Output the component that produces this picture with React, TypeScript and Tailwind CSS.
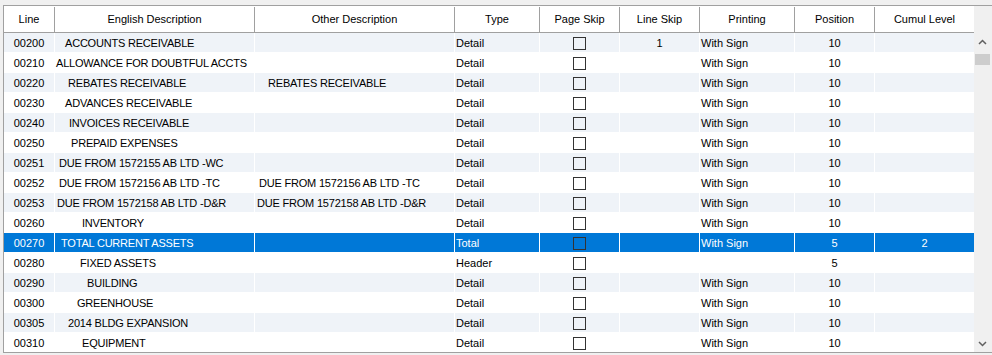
type Row = {
  line: string;
  desc: string;
  descPad: number;
  other?: string;
  otherPad?: number;
  type: string;
  lineSkip?: string;
  printing?: string;
  position: string;
  cumul?: string;
  selected?: boolean;
};

const rows: Row[] = [
  { line: "00200", desc: "ACCOUNTS RECEIVABLE", descPad: 10, type: "Detail", lineSkip: "1", printing: "With Sign", position: "10" },
  { line: "00210", desc: "ALLOWANCE FOR DOUBTFUL ACCTS", descPad: 1, type: "Detail", printing: "With Sign", position: "10" },
  { line: "00220", desc: "REBATES RECEIVABLE", descPad: 13, other: "REBATES RECEIVABLE", otherPad: 13, type: "Detail", printing: "With Sign", position: "10" },
  { line: "00230", desc: "ADVANCES RECEIVABLE", descPad: 10, type: "Detail", printing: "With Sign", position: "10" },
  { line: "00240", desc: "INVOICES RECEIVABLE", descPad: 14, type: "Detail", printing: "With Sign", position: "10" },
  { line: "00250", desc: "PREPAID EXPENSES", descPad: 16, type: "Detail", printing: "With Sign", position: "10" },
  { line: "00251", desc: "DUE FROM 1572155 AB LTD -WC", descPad: 4, type: "Detail", printing: "With Sign", position: "10" },
  { line: "00252", desc: "DUE FROM 1572156 AB LTD -TC", descPad: 4, other: "DUE FROM 1572156 AB LTD -TC", otherPad: 4, type: "Detail", printing: "With Sign", position: "10" },
  { line: "00253", desc: "DUE FROM 1572158 AB LTD -D&R", descPad: 2, other: "DUE FROM 1572158 AB LTD -D&R", otherPad: 2, type: "Detail", printing: "With Sign", position: "10" },
  { line: "00260", desc: "INVENTORY", descPad: 27, type: "Detail", printing: "With Sign", position: "10" },
  { line: "00270", desc: "TOTAL CURRENT ASSETS", descPad: 6, type: "Total", printing: "With Sign", position: "5", cumul: "2", selected: true },
  { line: "00280", desc: "FIXED ASSETS", descPad: 25, type: "Header", position: "5" },
  { line: "00290", desc: "BUILDING", descPad: 32, type: "Detail", printing: "With Sign", position: "10" },
  { line: "00300", desc: "GREENHOUSE", descPad: 22, type: "Detail", printing: "With Sign", position: "10" },
  { line: "00305", desc: "2014 BLDG EXPANSION", descPad: 13, type: "Detail", printing: "With Sign", position: "10" },
  { line: "00310", desc: "EQUIPMENT", descPad: 27, type: "Detail", printing: "With Sign", position: "10" },
];

const headers = [
  { label: "Line", w: "w-[51px]" },
  { label: "English Description", w: "w-[200px]" },
  { label: "Other Description", w: "w-[200px]" },
  { label: "Type", w: "w-[85px]" },
  { label: "Page Skip", w: "w-[80px]" },
  { label: "Line Skip", w: "w-[80px]" },
  { label: "Printing", w: "w-[95px]" },
  { label: "Position", w: "w-[80px]" },
  { label: "Cumul Level", w: "w-[99px]" },
];

function Chevron({ up }: { up?: boolean }) {
  return (
    <svg width="9" height="6" viewBox="0 0 9 6" className="block">
      <path
        d={up ? "M1 5 L4.5 1.5 L8 5" : "M1 1 L4.5 4.5 L8 1"}
        fill="none"
        stroke="#606060"
        strokeWidth="1.5"
      />
    </svg>
  );
}

export default function App() {
  return (
    <div className="h-[355px] w-[992px] bg-[#f0f0f0] pl-[3px] pt-[5px] font-['Liberation_Sans',Arial,sans-serif] text-[11px] text-black">
      <div className="flex h-[348px] w-[989px] border-b border-l border-t border-[#a0a0a0] bg-white">
        <div className="flex w-[970px] flex-col overflow-hidden">
          {/* header */}
          <div className="flex h-[27px] shrink-0 border-b border-[#a0a0a0] bg-white pt-[1px]">
            {headers.map((h) => (
              <div
                key={h.label}
                className={`${h.w} flex shrink-0 items-center justify-center border-r border-[#a0a0a0] last:border-r-0`}
              >
                {h.label}
              </div>
            ))}
          </div>

          {/* rows */}
          <div className="flex flex-col">
            {rows.map((r, i) => {
              const bg = r.selected
                ? "bg-[#0078d7] text-white"
                : i % 2 === 0
                  ? "bg-[#eff3f8]"
                  : "bg-white";
              const cell = `flex h-[20px] shrink-0 items-center border-b border-r border-white pt-[1px] ${bg}`;
              return (
                <div key={r.line} className="flex">
                  <div className={`${cell} w-[51px] justify-center`}>{r.line}</div>
                  <div
                    className={`${cell} w-[200px] whitespace-pre tracking-[-0.2px]`}
                    style={{ paddingLeft: r.descPad }}
                  >
                    {r.desc}
                  </div>
                  <div
                    className={`${cell} w-[200px] whitespace-pre tracking-[-0.2px]`}
                    style={{ paddingLeft: r.otherPad ?? 0 }}
                  >
                    {r.other ?? ""}
                  </div>
                  <div className={`${cell} w-[85px] pl-[1px]`}>{r.type}</div>
                  <div className={`${cell} w-[80px] justify-center`}>
                    <span className="block h-[13px] w-[13px] border border-[#333333]" />
                  </div>
                  <div className={`${cell} w-[80px] justify-center`}>{r.lineSkip ?? ""}</div>
                  <div className={`${cell} w-[95px] pl-[1px]`}>{r.printing ?? ""}</div>
                  <div className={`${cell} w-[80px] justify-center`}>{r.position}</div>
                  <div className={`${cell} w-[99px] justify-center border-r-0`}>{r.cumul ?? ""}</div>
                </div>
              );
            })}
          </div>
        </div>

        {/* vertical scrollbar */}
        <div className="flex w-[18px] flex-col bg-[#f0f0f0]">
          <div className="h-[27px] shrink-0" />
          <div className="flex h-[17px] shrink-0 items-center justify-center pr-[1px]">
            <Chevron up />
          </div>
          <div className="flex-1 pl-[1px] pr-[2px] pt-[4px]">
            <div className="h-[11px] bg-[#cdcdcd]" />
          </div>
          <div className="flex h-[17px] shrink-0 items-center justify-center pr-[1px]">
            <Chevron />
          </div>
        </div>
      </div>
    </div>
  );
}
